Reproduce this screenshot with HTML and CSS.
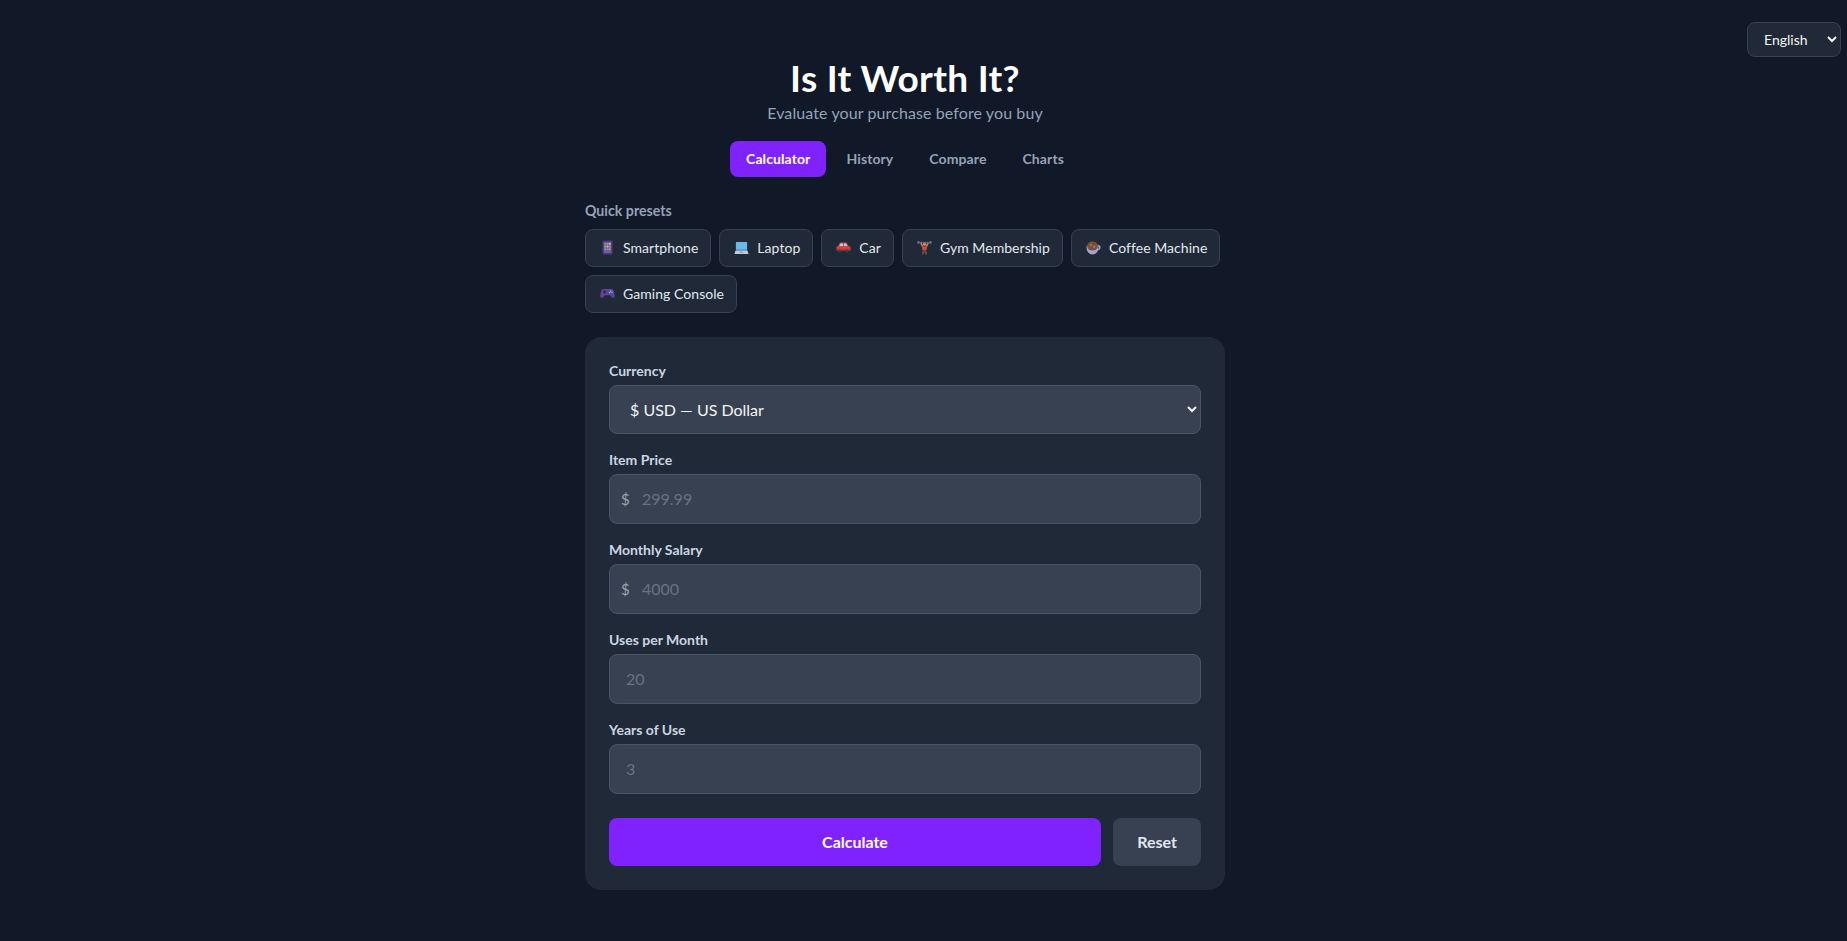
FILE: index.html
```html
<!DOCTYPE html>
<html lang="en">
<head>
  <meta charset="UTF-8">
  <meta name="viewport" content="width=device-width, initial-scale=1.0">
  <title>Is It Worth It?</title>
  <link rel="stylesheet" href="styles.css">
</head>
<body>
  <div class="langSwitch">
    <select class="langSelect">
      <option>English</option>
    </select>
  </div>
  <div class="app">
    <header class="appHeader">
      <h1>Is It Worth It?</h1>
      <p>Evaluate your purchase before you buy</p>
    </header>
    <nav class="tabs">
      <button class="tab active">Calculator</button>
      <button class="tab">History</button>
      <button class="tab">Compare</button>
      <button class="tab">Charts</button>
    </nav>
    <section class="presets">
      <div class="presetsTitle">Quick presets</div>
      <div class="presetList">
        <button class="preset">
          <span class="emoji">
            <svg viewBox="0 0 14 16" width="13" height="15">
              <rect x="1.5" y="0.5" width="11" height="15" rx="1.5" fill="#463a78"/>
              <rect x="3" y="2" width="8" height="12" fill="#6a5aa8"/>
              <rect x="3.5" y="3" width="2" height="2" fill="#e0685a"/>
              <rect x="6" y="3" width="2" height="2" fill="#4fb0d8"/>
              <rect x="8.5" y="3" width="2" height="2" fill="#e8b84a"/>
              <rect x="3.5" y="6" width="2" height="2" fill="#6cc070"/>
              <rect x="6" y="6" width="2" height="2" fill="#e8b84a"/>
              <rect x="8.5" y="6" width="2" height="2" fill="#d86aa0"/>
              <rect x="3.5" y="9" width="2" height="2" fill="#4fb0d8"/>
              <rect x="6" y="9" width="2" height="2" fill="#e0685a"/>
              <rect x="8.5" y="9" width="2" height="2" fill="#6cc070"/>
            </svg>
          </span>Smartphone
        </button>
        <button class="preset">
          <span class="emoji">
            <svg viewBox="0 0 16 14" width="15" height="14">
              <rect x="2" y="0.5" width="12" height="9.5" rx="0.8" fill="#6cb8e8"/>
              <rect x="2" y="8.5" width="12" height="1.5" fill="#4f8fc0"/>
              <path d="M1.5 10h13l1 3.5H0.5z" fill="#c3ccd6"/>
              <rect x="6" y="11" width="4" height="1.2" fill="#8a96a3"/>
            </svg>
          </span>Laptop
        </button>
        <button class="preset">
          <span class="emoji">
            <svg viewBox="0 0 15 11" width="15" height="11">
              <path d="M4 0.500h6.500l2 3.500 2 0.800v3.700H0.500V4.800L2.200 4z" fill="#d8433f"/>
              <path d="M4.600 1.500h2.400v2.500H3.300zM8 1.500h2l1.300 2.500H8z" fill="#a9d4ee"/>
              <rect x="0.500" y="6.800" width="14" height="0.800" fill="#a82e32"/>
              <circle cx="3.800" cy="9" r="1.500" fill="#3b3f4a"/>
              <circle cx="11.200" cy="9" r="1.500" fill="#3b3f4a"/>
            </svg>
          </span>Car
        </button>
        <button class="preset">
          <span class="emoji">
            <svg viewBox="0 0 16 15" width="15" height="14">
              <path d="M1 1.500l14 0" stroke="#5f6670" stroke-width="1.200"/>
              <rect x="0.500" y="0" width="2" height="3" fill="#70757e"/>
              <rect x="13.500" y="0" width="2" height="3" fill="#70757e"/>
              <path d="M4 2l2 4M12 2l-2 4" stroke="#c98a5a" stroke-width="1.500"/>
              <circle cx="8" cy="3.500" r="1.900" fill="#c98a5a"/>
              <path d="M5 6h6l-1 4H6z" fill="#d8483c"/>
              <path d="M6 10h4l1 4.500H9L8 12l-1 2.500H5z" fill="#6b4a3a"/>
            </svg>
          </span>Gym Membership
        </button>
        <button class="preset">
          <span class="emoji">
            <svg viewBox="0 0 15 14" width="15" height="14">
              <path d="M11 4.500c3.500-0.500 4 3.500 0.500 4.500" fill="none" stroke="#a9a3d0" stroke-width="1.300"/>
              <path d="M0.500 5h12c0.300 4.500-2 8.500-6 8.500S0.200 9.500 0.500 5z" fill="#a9a3d0"/>
              <ellipse cx="6.500" cy="5" rx="5.500" ry="4.500" fill="#7d5138"/>
              <circle cx="4.800" cy="4" r="1" fill="#a87855"/>
              <circle cx="8.200" cy="5.800" r="1.100" fill="#a87855"/>
              <circle cx="7.800" cy="2.600" r="0.700" fill="#5a3825"/>
            </svg>
          </span>Coffee Machine
        </button>
        <button class="preset">
          <span class="emoji">
            <svg viewBox="0 0 16 12" width="15" height="11">
              <path d="M3.500 1h9c1.600 0 2.200 1.200 2.600 3l0.800 4.500c0.300 2-2.200 3.200-3.600 1.300L11 8H5l-1.300 1.800C2.300 11.700-0.200 10.500 0.100 8.500L0.900 4C1.300 2.200 1.900 1 3.500 1z" fill="#5f4396"/>
              <rect x="3" y="3.800" width="3.600" height="1.200" fill="#2f2450"/>
              <rect x="4.200" y="2.600" width="1.200" height="3.600" fill="#2f2450"/>
              <circle cx="11.500" cy="3.500" r="0.800" fill="#8fb8e8"/>
              <circle cx="10.200" cy="5" r="0.800" fill="#8fb8e8"/>
              <circle cx="12.800" cy="5" r="0.800" fill="#8fb8e8"/>
            </svg>
          </span>Gaming Console
        </button>
      </div>
    </section>
    <form class="card">
      <div class="field">
        <label>Currency</label>
        <select class="control currency">
          <option>$ USD — US Dollar</option>
        </select>
      </div>
      <div class="field">
        <label>Item Price</label>
        <div class="inputWrap">
          <span class="prefix">$</span>
          <input class="control hasPrefix" type="text" placeholder="299.99">
        </div>
      </div>
      <div class="field">
        <label>Monthly Salary</label>
        <div class="inputWrap">
          <span class="prefix">$</span>
          <input class="control hasPrefix" type="text" placeholder="4000">
        </div>
      </div>
      <div class="field">
        <label>Uses per Month</label>
        <input class="control" type="text" placeholder="20">
      </div>
      <div class="field">
        <label>Years of Use</label>
        <input class="control" type="text" placeholder="3">
      </div>
      <div class="actions">
        <button type="button" class="btnPrimary">Calculate</button>
        <button type="button" class="btnReset">Reset</button>
      </div>
    </form>
  </div>
</body>
</html>
```

FILE: styles.css
```css
*{
  box-sizing: border-box;
}
body{
  margin: 0;
  min-height: 941px;
  padding-right: 37px;
  background-color: #111827;
  color: #f3f4f6;
  font-family: Lato, "Noto Sans", sans-serif;
}
.langSwitch{
  position: absolute;
  top: 22px;
  right: 6px;
}
.langSelect{
  width: 94px;
  height: 35px;
  padding: 0 4px 0 12px;
  font: 14px Lato, sans-serif;
  color: #f3f4f6;
  background-color: #1f2937;
  border: 1px solid #374151;
  border-radius: 8px;
}
.app{
  width: 640px;
  margin: 0 auto;
  padding-top: 54px;
}
.appHeader{
  text-align: center;
}
.appHeader h1{
  margin: 0;
  font-size: 37px;
  line-height: 48px;
  letter-spacing: 0.3px;
  font-weight: 700;
  color: #fff;
}
.appHeader p{
  margin: 0;
  font-size: 16px;
  letter-spacing: 0.1px;
  line-height: 22px;
  color: #94a3b8;
}
.tabs{
  display: flex;
  justify-content: center;
  gap: 4px;
  margin-top: 17px;
}
.tab{
  height: 36px;
  padding: 0 16px 1px;
  font: 700 14px Lato, sans-serif;
  letter-spacing: 0.1px;
  color: #94a3b8;
  background: none;
  border: 0;
  border-radius: 8px;
}
.tab.active{
  color: #fff;
  background-color: #7f22fe;
}
.presets{
  margin-top: 25px;
}
.presetsTitle{
  font-size: 14.2px;
  font-weight: 700;
  line-height: 18px;
  color: #94a3b8;
  margin-bottom: 9px;
}
.presetList{
  display: flex;
  flex-wrap: wrap;
  gap: 8px;
}
.preset{
  display: flex;
  align-items: center;
  height: 38px;
  padding: 0 12px 1px;
  font: 14px Lato, sans-serif;
  letter-spacing: 0.05px;
  color: #e2e8f0;
  background-color: #1f2937;
  border: 1px solid #374151;
  border-radius: 8px;
}
.emoji{
  display: flex;
  justify-content: center;
  width: 19px;
  margin-right: 6px;
}
.card{
  margin-top: 24px;
  padding: 24px;
  background-color: #1f2937;
  border-radius: 16px;
}
.field{
  margin-bottom: 16px;
}
.field label{
  display: block;
  font-size: 14px;
  font-weight: 700;
  line-height: 20px;
  color: #cbd5e1;
  margin-bottom: 4px;
}
.control{
  display: block;
  width: 100%;
  height: 50px;
  padding: 0 16px 1px;
  font: 16px Lato, sans-serif;
  color: #f3f4f6;
  background-color: #374151;
  border: 1px solid #4b5563;
  border-radius: 8px;
}
.currency{
  height: 49px;
}
.control::placeholder{
  color: #6b7280;
}
.inputWrap{
  position: relative;
}
.prefix{
  position: absolute;
  left: 12px;
  top: 16px;
  font-size: 15px;
  color: #9ca3af;
}
.hasPrefix{
  padding-left: 32px;
}
.actions{
  display: flex;
  gap: 12px;
  margin-top: 24px;
}
.btnPrimary{
  flex: 1;
  height: 48px;
  padding-bottom: 2px;
  font: 700 16px Lato, sans-serif;
  color: #fff;
  background-color: #7f22fe;
  border: 0;
  border-radius: 8px;
}
.btnReset{
  width: 88px;
  height: 48px;
  padding-bottom: 2px;
  font: 700 16px Lato, sans-serif;
  color: #e2e8f0;
  background-color: #374151;
  border: 0;
  border-radius: 8px;
}
```
